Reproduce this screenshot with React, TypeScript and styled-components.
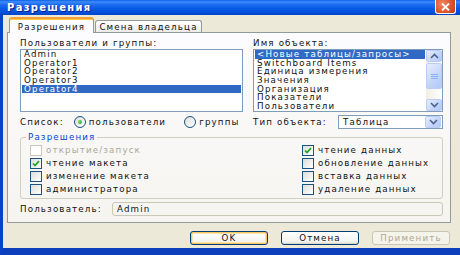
import React from "react";
import styled, { createGlobalStyle } from "styled-components";

const Global = createGlobalStyle`
  html, body { margin: 0; padding: 0; background: #ECE9D8; }
  body { width: 460px; height: 255px; overflow: hidden; }
  * { box-sizing: border-box; }
`;

const Window = styled.div`
  width: 460px;
  height: 255px;
  display: flex;
  flex-direction: column;
  overflow: hidden;
  font-family: "DejaVu Sans", Verdana, sans-serif;
  font-size: 8.7px;
  letter-spacing: 1.15px;
  color: #111;
`;

const TitleBar = styled.div`
  flex: none;
  height: 15px;
  display: flex;
  align-items: flex-start;
  justify-content: space-between;
  padding: 0 4px 0 7px;
  background: linear-gradient(
    to bottom,
    #0a5ff0 0%,
    #3d8cf8 12%,
    #1f6cf2 30%,
    #0558e6 60%,
    #034fd8 85%,
    #0242c4 100%
  );
`;

const TitleText = styled.span`
  color: #fff;
  font-weight: bold;
  font-size: 10px;
  letter-spacing: 1.3px;
  line-height: 15px;
  text-shadow: 1px 1px 0 #0a1e8c;
`;

const CloseButton = styled.div`
  width: 21px;
  height: 14px;
  display: flex;
  align-items: center;
  justify-content: center;
  border: 1px solid #fff;
  border-top: none;
  border-radius: 0 0 3px 3px;
  background: radial-gradient(circle at 35% 30%, #f08a66 0%, #e0552f 55%, #c23a14 100%);
`;

const Frame = styled.div`
  flex: 1;
  display: flex;
  flex-direction: column;
  background: #ece9d8;
  border-left: 3px solid #0842c9;
  border-bottom: 7px solid #0d3fbd;
  padding: 2px 0 0 4px;
`;

const TabStrip = styled.div`
  display: flex;
  align-items: flex-end;
  height: 15px;
  padding-left: 2px;
  position: relative;
  z-index: 1;
`;

const Tab = styled.div<{ $active?: boolean }>`
  display: flex;
  align-items: center;
  justify-content: center;
  border: 1px solid #919b9c;
  border-bottom: none;
  border-radius: 3px 3px 0 0;
  width: ${(p) => (p.$active ? "85px" : "107px")};
  padding-top: 1px;
  height: ${(p) => (p.$active ? "16px" : "12px")};
  margin-bottom: ${(p) => (p.$active ? "-1px" : "0")};
  margin-left: ${(p) => (p.$active ? "0" : "1px")};
  background: ${(p) =>
    p.$active ? "#fcfcfe" : "linear-gradient(to bottom, #ffffff, #ecebe6)"};
  border-top: ${(p) => (p.$active ? "2px solid #f2a13a" : "1px solid #919b9c")};
  box-shadow: ${(p) => (p.$active ? "inset 0 1px 0 #ffc83c" : "none")};
`;

const Panel = styled.div`
  width: 444px;
  border: 1px solid #919b9c;
  background: linear-gradient(to bottom, #fcfcfe, #f5f4ef);
  padding: 5px 7px 6px 12px;
  display: flex;
  flex-direction: column;
`;

const TopGrid = styled.div`
  display: grid;
  grid-template-columns: 223px 190px;
  column-gap: 10px;
`;

const Column = styled.div`
  display: flex;
  flex-direction: column;
`;

const Label = styled.div`
  height: 11px;
  line-height: 11px;
  white-space: nowrap;
`;

const ListBox = styled.div`
  height: 63px;
  border: 1px solid #7f9db9;
  background: #fff;
  display: flex;
  overflow: hidden;
`;

const Items = styled.div`
  flex: 1;
  display: flex;
  flex-direction: column;
  padding: 0 1px;
  min-width: 0;
`;

const Item = styled.div<{ $selected?: boolean }>`
  height: 8.7px;
  line-height: 8.7px;
  padding-left: 2px;
  white-space: nowrap;
  background: ${(p) => (p.$selected ? "#316ac5" : "transparent")};
  color: ${(p) => (p.$selected ? "#fff" : "#111")};
`;

const ScrollBar = styled.div`
  width: 16px;
  display: flex;
  flex-direction: column;
  gap: 1px;
  background: linear-gradient(to right, #f0efe6, #fefefb);
`;

const ScrollBtn = styled.div<{ $h?: number; $w?: number }>`
  height: ${(p) => p.$h ?? 12}px;
  width: ${(p) => (p.$w ? `${p.$w}px` : "auto")};
  flex: none;
  border: 1px solid #bccdf5;
  border-radius: 2px;
  background: linear-gradient(135deg, #e6eefe, #c3d5fb 60%, #b0c7f6);
  display: flex;
  align-items: center;
  justify-content: center;
`;

const Track = styled.div`
  flex: 1;
`;

const ControlRow = styled.div<{ $spread?: boolean }>`
  height: 14px;
  margin-top: 3px;
  display: flex;
  align-items: center;
  justify-content: ${(p) => (p.$spread ? "space-between" : "flex-start")};
  white-space: nowrap;
`;

const RadioOption = styled.label<{ $offset: number }>`
  display: flex;
  align-items: center;
  gap: 3px;
  margin-left: ${(p) => p.$offset}px;
`;

const RadioCircle = styled.span<{ $checked?: boolean }>`
  width: 12px;
  height: 12px;
  border-radius: 50%;
  border: 1px solid #1c5180;
  background: linear-gradient(135deg, #dcdcd7, #ffffff);
  display: flex;
  align-items: center;
  justify-content: center;
  &::after {
    content: "";
    width: 4px;
    height: 4px;
    border-radius: 50%;
    background: ${(p) =>
      p.$checked ? "radial-gradient(circle at 35% 35%, #6fe06f, #1b9a1b)" : "transparent"};
  }
`;

const Combo = styled.div`
  width: 105px;
  height: 14px;
  border: 1px solid #7f9db9;
  background: #fff;
  display: flex;
  align-items: center;
  padding: 0 1px 0 4px;
`;

const ComboText = styled.span`
  flex: 1;
`;

const GroupBox = styled.fieldset`
  margin: 3px 0 0 0;
  padding: 1.5px 9px 2px 9px;
  border: 1px solid #d0d0bf;
  border-radius: 3px;
  min-width: 0;
`;

const Legend = styled.legend`
  color: #0046d5;
  padding: 0 2px;
  margin-left: -4px;
  line-height: 10px;
  height: 10px;
`;

const CheckGrid = styled.div`
  display: grid;
  grid-template-columns: 272px 1fr;
  grid-template-rows: repeat(4, 13px);
  grid-auto-flow: column;
`;

const CheckItem = styled.label<{ $disabled?: boolean }>`
  display: flex;
  align-items: center;
  gap: 4px;
  white-space: nowrap;
  color: ${(p) => (p.$disabled ? "#aca899" : "#111")};
`;

const CheckBox = styled.span<{ $disabled?: boolean }>`
  width: 12px;
  height: 11px;
  flex: none;
  border: 1px solid ${(p) => (p.$disabled ? "#cac8bb" : "#1c5180")};
  background: ${(p) =>
    p.$disabled ? "#fff" : "linear-gradient(135deg, #dcdcd7, #ffffff)"};
  display: flex;
  align-items: center;
  justify-content: center;
`;

const UserRow = styled.div`
  margin-top: 3.5px;
  height: 14px;
  display: flex;
  align-items: center;
`;

const UserLabel = styled.span`
  width: 92px;
  white-space: nowrap;
`;

const UserField = styled.div`
  flex: 1;
  height: 14px;
  border: 1px solid #c9c7b6;
  border-radius: 3px;
  padding-left: 4px;
  display: flex;
  align-items: center;
`;

const ButtonRow = styled.div`
  display: flex;
  justify-content: flex-end;
  gap: 13px;
  margin-top: 8px;
  padding-right: 10px;
`;

const Button = styled.div<{ $default?: boolean; $disabled?: boolean }>`
  width: 78px;
  height: 14px;
  display: flex;
  align-items: center;
  justify-content: center;
  border-radius: 3px;
  border: 1px solid ${(p) => (p.$disabled ? "#c9c7ba" : "#003c74")};
  color: ${(p) => (p.$disabled ? "#aca899" : "#111")};
  background: ${(p) =>
    p.$disabled
      ? "#f5f4ea"
      : "linear-gradient(to bottom, #ffffff, #f3f3ef 80%, #d8d4c8)"};
  box-shadow: ${(p) =>
    p.$default ? "inset 0 0 0 1px #f5c566, inset 0 0 0 2px #fde5a8" : "none"};
`;

const Chevron = ({ up }: { up?: boolean }) => (
  <svg width="9" height="6" viewBox="0 0 9 6">
    <path
      d={up ? "M1 5 L4.5 1.5 L8 5" : "M1 1 L4.5 4.5 L8 1"}
      fill="none"
      stroke="#4d6185"
      strokeWidth="1.6"
    />
  </svg>
);

const Grip = () => (
  <svg width="7" height="7" viewBox="0 0 7 7">
    {[1, 3, 5].map((y) => (
      <path key={y} d={`M0 ${y + 0.5} H7`} stroke="#eef3fe" strokeWidth="1" />
    ))}
    {[2, 4, 6].map((y) => (
      <path key={y} d={`M0 ${y - 0.5} H7`} stroke="#8cb0f8" strokeWidth="1" />
    ))}
  </svg>
);

const Check = () => (
  <svg width="8" height="7" viewBox="0 0 8 7">
    <path d="M1 3.5 L3 5.5 L7 1.2" fill="none" stroke="#21a121" strokeWidth="1.7" />
  </svg>
);

const users = ["Admin", "Operator1", "Operator2", "Operator3", "Operator4"];
const objects = [
  "<Новые таблицы/запросы>",
  "Switchboard Items",
  "Единица измерения",
  "Значения",
  "Организация",
  "Показатели",
  "Пользователи",
];

const perms = [
  { label: "открытие/запуск", checked: false, disabled: true },
  { label: "чтение макета", checked: true },
  { label: "изменение макета", checked: false },
  { label: "администратора", checked: false },
  { label: "чтение данных", checked: true },
  { label: "обновление данных", checked: false },
  { label: "вставка данных", checked: false },
  { label: "удаление данных", checked: false },
];

export default function App() {
  return (
    <>
      <Global />
      <Window>
        <TitleBar>
          <TitleText>Разрешения</TitleText>
          <CloseButton>
            <svg width="9" height="8" viewBox="0 0 9 8">
              <path d="M1 0.5 L8 7.5 M8 0.5 L1 7.5" stroke="#fff" strokeWidth="1.8" />
            </svg>
          </CloseButton>
        </TitleBar>
        <Frame>
          <TabStrip>
            <Tab $active>Разрешения</Tab>
            <Tab>Смена владельца</Tab>
          </TabStrip>
          <Panel>
            <TopGrid>
              <Column>
                <Label>Пользователи и группы:</Label>
                <ListBox>
                  <Items>
                    {users.map((u, i) => (
                      <Item key={u} $selected={i === users.length - 1}>
                        {u}
                      </Item>
                    ))}
                  </Items>
                </ListBox>
                <ControlRow>
                  <span>Список:</span>
                  <RadioOption $offset={10}>
                    <RadioCircle $checked />
                    пользователи
                  </RadioOption>
                  <RadioOption $offset={18}>
                    <RadioCircle />
                    группы
                  </RadioOption>
                </ControlRow>
              </Column>
              <Column>
                <Label>Имя объекта:</Label>
                <ListBox>
                  <Items>
                    {objects.map((o, i) => (
                      <Item key={o} $selected={i === 0}>
                        {o}
                      </Item>
                    ))}
                  </Items>
                  <ScrollBar>
                    <ScrollBtn>
                      <Chevron up />
                    </ScrollBtn>
                    <ScrollBtn $h={26}>
                      <Grip />
                    </ScrollBtn>
                    <Track />
                    <ScrollBtn>
                      <Chevron />
                    </ScrollBtn>
                  </ScrollBar>
                </ListBox>
                <ControlRow $spread>
                  <span>Тип объекта:</span>
                  <Combo>
                    <ComboText>Таблица</ComboText>
                    <ScrollBtn $h={12} $w={16}>
                      <Chevron />
                    </ScrollBtn>
                  </Combo>
                </ControlRow>
              </Column>
            </TopGrid>
            <GroupBox>
              <Legend>Разрешения</Legend>
              <CheckGrid>
                {perms.map((p) => (
                  <CheckItem key={p.label} $disabled={p.disabled}>
                    <CheckBox $disabled={p.disabled}>{p.checked && <Check />}</CheckBox>
                    {p.label}
                  </CheckItem>
                ))}
              </CheckGrid>
            </GroupBox>
            <UserRow>
              <UserLabel>Пользователь:</UserLabel>
              <UserField>Admin</UserField>
            </UserRow>
          </Panel>
          <ButtonRow>
            <Button $default>OK</Button>
            <Button>Отмена</Button>
            <Button $disabled>Применить</Button>
          </ButtonRow>
        </Frame>
      </Window>
    </>
  );
}
